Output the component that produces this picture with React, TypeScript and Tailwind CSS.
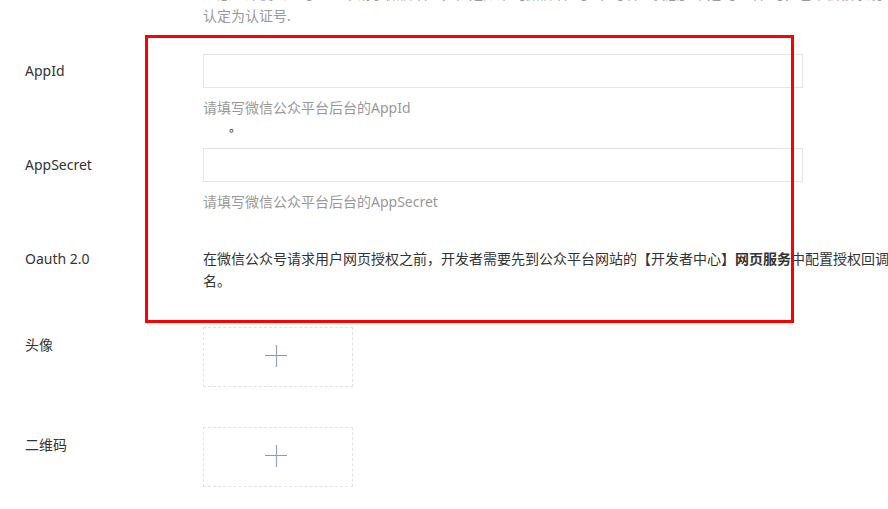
import React from "react";

function Plus() {
  return (
    <svg width="22" height="22" viewBox="0 0 22 22" className="block">
      <line x1="0" y1="10.5" x2="22" y2="10.5" stroke="#999" strokeWidth="1" />
      <line x1="11.5" y1="0" x2="11.5" y2="22" stroke="#9aa6bb" strokeWidth="1.3" />
    </svg>
  );
}

function UploadBox() {
  return (
    <div className="w-[150px] h-[60px] border border-dashed border-[#e3e3e3] flex items-center justify-center">
      <div className="-mt-[3px] -ml-[4px]">
        <Plus />
      </div>
    </div>
  );
}

export default function App() {
  return (
    <div className="relative w-[888px] h-[509px] overflow-hidden bg-white text-[14px] text-[#333] font-['Noto_Sans','Noto_Sans_CJK_SC',sans-serif]">
      {/* clipped help text from previous row */}
      <div className="ml-[203px] -mt-[17px] leading-[22px] text-[#999] w-[700px]">
        注意：即使公众号已经申请了微信认证，但是如果【微信认证】中【认证状态】不是【已认证】，也不会被系统
        <br />
        认定为认证号.
      </div>

      {/* AppId */}
      <div className="flex mt-[27px]">
        <div className="w-[203px] shrink-0 pl-[25px] leading-[34px]">AppId</div>
        <div className="flex flex-col">
          <div className="w-[600px] h-[34px] border border-[#e5e5e5]" />
          <div className="mt-[9px] leading-[22px] text-[#999]">请填写微信公众平台后台的AppId</div>
          <div className="leading-[18px] pl-[26px] text-[12px] text-[#222]">。</div>
        </div>
      </div>

      {/* AppSecret */}
      <div className="flex mt-[11px]">
        <div className="w-[203px] shrink-0 pl-[25px] leading-[34px]">AppSecret</div>
        <div className="flex flex-col">
          <div className="w-[600px] h-[34px] border border-[#e5e5e5]" />
          <div className="mt-[9px] leading-[22px] text-[#999]">请填写微信公众平台后台的AppSecret</div>
        </div>
      </div>

      {/* Oauth */}
      <div className="flex mt-[35px]">
        <div className="w-[203px] shrink-0 pl-[25px] leading-[22px]">Oauth 2.0</div>
        <div className="w-[700px] shrink-0 leading-[22px]">
          在微信公众号请求用户网页授权之前，开发者需要先到公众平台网站的【开发者中心】<span className="font-bold">网页服务</span>中配置授权回调域名。
        </div>
      </div>

      {/* 头像 */}
      <div className="flex mt-[35px]">
        <div className="w-[203px] shrink-0 pl-[25px] pt-[7px] leading-[22px]">头像</div>
        <UploadBox />
      </div>

      {/* 二维码 */}
      <div className="flex mt-[40px]">
        <div className="w-[203px] shrink-0 pl-[25px] pt-[7px] leading-[22px]">二维码</div>
        <UploadBox />
      </div>

      {/* red annotation box */}
      <div className="absolute left-[145px] top-[35px] w-[649px] h-[288px] border-[3px] border-[#ff0000] pointer-events-none" />
    </div>
  );
}
